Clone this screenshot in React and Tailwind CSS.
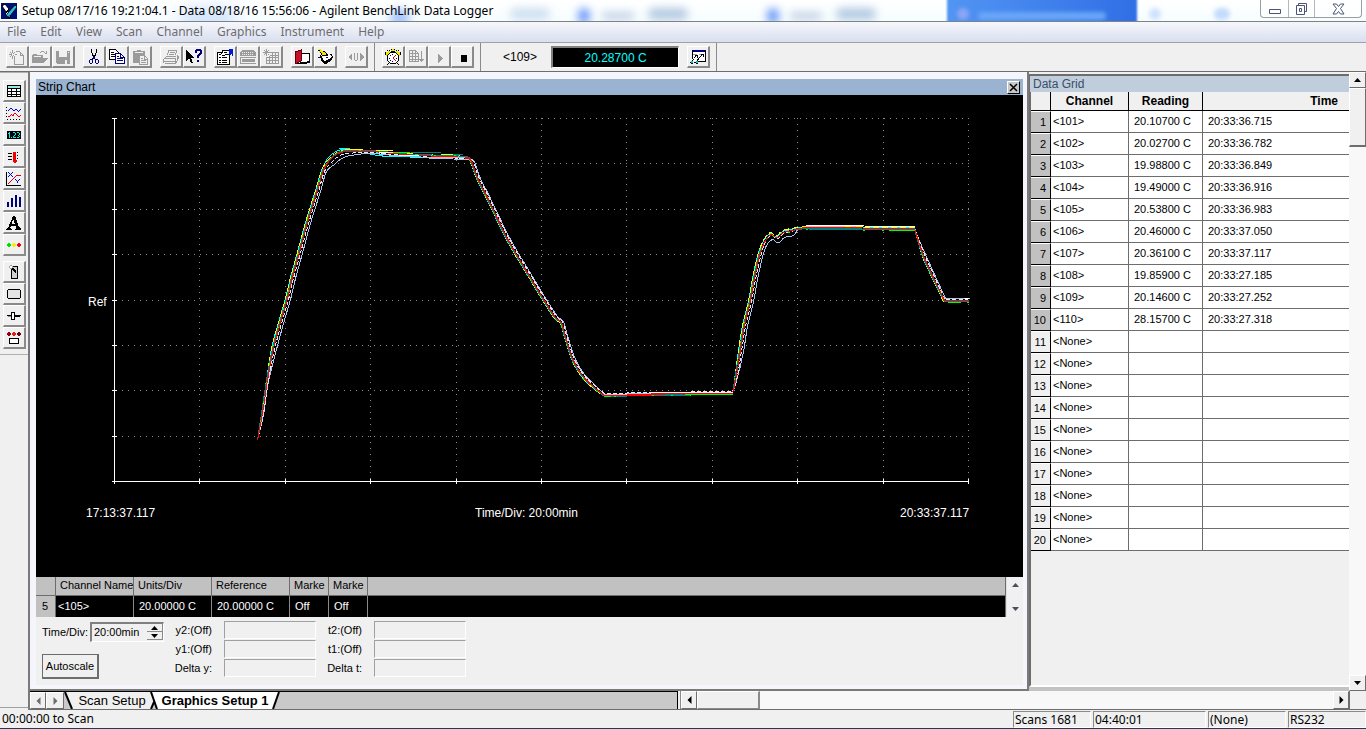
import { useState } from 'react';
import clsx from 'clsx';

const MENU = ['File', 'Edit', 'View', 'Scan', 'Channel', 'Graphics', 'Instrument', 'Help'];

const READINGS = [
  ['<101>', '20.10700 C', '20:33:36.715'],
  ['<102>', '20.02700 C', '20:33:36.782'],
  ['<103>', '19.98800 C', '20:33:36.849'],
  ['<104>', '19.49000 C', '20:33:36.916'],
  ['<105>', '20.53800 C', '20:33:36.983'],
  ['<106>', '20.46000 C', '20:33:37.050'],
  ['<107>', '20.36100 C', '20:33:37.117'],
  ['<108>', '19.85900 C', '20:33:27.185'],
  ['<109>', '20.14600 C', '20:33:27.252'],
  ['<110>', '28.15700 C', '20:33:27.318'],
  ...Array.from({ length: 10 }, () => ['<None>', '', '']),
];

// [phase, x, y] - one temperature profile, each channel is a small shift of it
const PROFILE = [
  ['start', 257, 440], ['first', 262, 413], ['first', 267, 380], ['up', 273, 348], ['up', 280, 322],
  ['up', 287, 298], ['up', 292, 277], ['up', 300, 248], ['up', 307, 222], ['up', 317, 190],
  ['up', 323, 170], ['knee', 329, 160], ['knee', 336, 154], ['knee', 345, 151], ['top', 370, 151],
  ['top', 393, 153], ['top', 417, 155], ['top', 464, 157], ['down', 471, 161], ['down', 477, 177],
  ['down', 487, 197], ['down', 508, 240], ['down', 530, 277], ['down', 542, 297], ['down', 555, 317],
  ['down', 561, 322], ['down', 565, 336], ['down', 573, 360], ['down', 582, 375], ['down', 594, 387],
  ['low', 604, 395], ['low', 650, 394], ['low', 732, 393], ['first', 735, 380], ['up', 740, 350],
  ['up', 744, 325], ['up', 750, 300], ['up', 755, 273], ['up', 760, 252], ['bump', 765, 240],
  ['bump', 771, 234], ['bump', 775, 237], ['bump', 778, 237], ['bump', 783, 232], ['bump', 792, 230],
  ['mid', 797, 228], ['mid', 807, 227], ['mid', 914, 228], ['down', 923, 255], ['down', 932, 275],
  ['end', 944, 300], ['end', 968, 300],
];

const SHARP = ['start', 'low', 'mid', 'end'];

const TRACES = [
  { color: '#aac4ec', first: [1, 1], up: [3, 1], knee: [5, 4], top: [0, 2], down: [2, -1], low: [0, -1], bump: [1, 5], mid: [0, 1], end: [1, -2] },
  { color: '#e6ecf8', dash: '4 2', first: [1, 0], up: [1, 1], knee: [2, 2], top: [0, 1], down: [1, -1], low: [0, -2], bump: [0, 1], mid: [0, -1], end: [0, -1] },
  { color: '#00ffff', first: [-1, 0], up: [-2, 0], knee: [-2, -2], top: [0, 0], down: [-1, 1], low: [0, 1], bump: [-1, -1], mid: [0, -1], end: [-1, 1] },
  { color: '#ffff00', dash: '6 3', first: [-1, 0], up: [-2, 0], knee: [-1, -1], top: [0, -1], down: [-1, 1], low: [0, 1], bump: [-1, -2], mid: [0, -1], end: [-1, 1] },
  { color: '#008080', first: [-1, 0], up: [-1, 0], knee: [0, -1], top: [0, -1], down: [-1, 0], low: [0, 1], bump: [0, 0], mid: [0, 1], end: [0, 1] },
  { color: '#00ff00', dash: '2 17', first: [-1, 0], up: [-1, 0], knee: [-1, 0], top: [0, -1], down: [-1, 1], low: [0, 1], bump: [0, 1], mid: [0, 2], end: [0, 2] },
  { color: '#ff0000', first: [0, 0], up: [0, 0], knee: [0, 0], top: [0, 0], down: [0, 0], low: [0, 0], bump: [0, 0], mid: [0, 0], end: [0, 0] },
];

// stretches where another channel is drawn over the flat parts
const OVERLAYS = [
  ['#00ffff', 'M338 148H349M370 154L386 156H420'],
  ['#ffff00', 'M344 149H362M375 150H392M406 153H412M440 154H452'],
  ['#00ff00', 'M392 152H409M603 396H610M684 394H732M830 229H834M888 230H914M948 302H960'],
  ['#008080', 'M362 150H374M410 152H440M452 154H462M664 394H682M808 229H914'],
  ['#ffffff', 'M378 152H392M398 155H418M650 392H732M805 225H863M864 226H914M963 298H968'],
  ['#c0c0c0', 'M424 157H464M805 226H862'],
  ['#ffff00', 'M844 226H850M855 226H862'],
  ['#ff0000', 'M464 158H470M620 395H650M650 393H732M868 228H914M945 300H968'],
];

// Catmull-Rom through the shifted points; plateau ends stay sharp
function tracePath(trace) {
  const pts = PROFILE.map(([phase, x, y]) => {
    const [dx, dy] = trace[phase] || [0, 0];
    return [x + dx, y + dy];
  });
  const slope = (i) => {
    if (SHARP.includes(PROFILE[i][0]) || !pts[i + 1]) return [0, 0];
    return [(pts[i + 1][0] - pts[i - 1][0]) / 6, (pts[i + 1][1] - pts[i - 1][1]) / 6];
  };
  return pts.slice(1).reduce((d, [x, y], i) => {
    const [ax, ay] = slope(i);
    const [bx, by] = slope(i + 1);
    return `${d}C${pts[i][0] + ax} ${pts[i][1] + ay} ${x - bx} ${y - by} ${x} ${y}`;
  }, `M${pts[0][0]} ${pts[0][1]}`);
}

function StripChart() {
  const xs = Array.from({ length: 11 }, (_, i) => Math.round(114 + i * 85.4) + 0.5);
  const ys = Array.from({ length: 9 }, (_, i) => Math.round(118 + i * 45.4) + 0.5);
  return (
    <svg viewBox="36 95 987 482" className="block h-full w-full font-['Liberation_Sans',Arial,sans-serif] text-xs" fill="none" shapeRendering="crispEdges">
      <g stroke="#8c8c8c" strokeDasharray="1 5">
        {xs.slice(1).map((x) => <path key={x} d={`M${x} 118V481`} />)}
        {ys.slice(0, 8).map((y) => <path key={y} d={`M116 ${y}H969`} />)}
      </g>
      <g stroke="#ffffff">
        <path d="M114.5 118V482M112 481.5H969" />
        {xs.map((x) => <path key={x} d={`M${x} 479V484`} />)}
        {ys.map((y) => <path key={y} d={`M112 ${y}H117`} />)}
      </g>
      <g transform="translate(0.5 0.5)">
        {TRACES.map((t) => (
          <path key={t.color} d={tracePath(t)} stroke={t.color} strokeDasharray={t.dash} />
        ))}
        {OVERLAYS.map(([color, d]) => <path key={d} d={d} stroke={color} />)}
      </g>
      <g fill="#ffffff">
        <text x="88" y="306">Ref</text>
        <text x="86" y="517">17:13:37.117</text>
        <text x="475" y="517">Time/Div: 20:00min</text>
        <text x="900" y="517">20:33:37.117</text>
      </g>
    </svg>
  );
}

function Ico({ children, w = 16 }) {
  return (
    <svg width={w} height="16" viewBox={`0 0 ${w} 16`} fill="none" shapeRendering="crispEdges" className="block shrink-0" aria-hidden="true">
      {children}
    </svg>
  );
}

function Lamp({ x, y, color }) {
  return <path d={`M${x + 1} ${y}h2v1h1v2h-1v1h-2v-1h-1v-2h1z`} fill={color} />;
}

const G = '#9b9b9b';

const icons = {
  new: (
    <Ico>
      <path d="M7 2.5h4M11.5 3v3h3M12.5 4v1M13.5 5v1M14.5 6v9M5.5 8v7M5 15.5h10" stroke={G} />
      <path d="M0 5.5h3M6 5.5h2M3.5 1v3M3.5 7v3M1.5 3v1M2.5 4v1M5.5 3v1M4.5 4v1M2.5 6v1M1.5 7v1M4.5 6v1M5.5 7v1" stroke={G} />
    </Ico>
  ),
  open: (
    <Ico>
      <path d="M0 6h1V5h4v1h6v3H5v1H4v1H3v2H1v1H0z" fill={G} />
      <path d="M5 9h11l-4 5H1z" fill={G} />
      <path d="M8 3.5h1M9 2.5h3M12 3.5h1M13 4.5h2M14.5 2v3M1 7h3M2 9h2" stroke={G} />
      <path d="M2 7.5h7" stroke="#f0f0f0" />
    </Ico>
  ),
  save: (
    <Ico>
      <path d="M1 2h14v13H2l-1-1z" fill={G} />
      <path d="M4 2h8v6H4zM10 11h2v4h-2z" fill="#f0f0f0" />
      <path d="M13 3.5h1" stroke="#f0f0f0" />
    </Ico>
  ),
  cut: (
    <Ico>
      <path d="M5.5 0v4M10.5 0v4M6.5 4v3M9.5 4v3M7.5 6v3M8.5 6v3" stroke="#000" />
      <path d="M7.5 8v2M8.5 8v2M6 9.5h1M9 10.5h2M4 10.5h2M3.5 11v3M6.5 10v4M4 14.5h2M9.5 11v3M12.5 11v3M10 14.5h2M10 10.5h2" stroke="#00007b" />
    </Ico>
  ),
  copy: (
    <Ico>
      <path d="M.5.5h6l3 3v7h-9z" fill="#fff" stroke="#000" />
      <path d="M2 3.5h3M2 5.5h4M2 7.5h4" stroke="#000" />
      <path d="M6.5 4.5h5l4 4v6h-9z" fill="#fff" stroke="#00007b" />
      <path d="M11.5 5v3h3M8 7.5h2M8 9.5h6M8 11.5h6" stroke="#00007b" />
    </Ico>
  ),
  paste: (
    <Ico>
      <path d="M1 2h4V1h4v1h4v4H7v8H1z" fill={G} />
      <path d="M3 3.5h8" stroke="#f0f0f0" />
      <path d="M7.5 6.5h5l3 3v6h-8z" fill="#f0f0f0" stroke={G} />
      <path d="M12.5 7v3h3M9 9.5h2M9 11.5h5M9 13.5h5" stroke={G} />
    </Ico>
  ),
  print: (
    <Ico>
      <path d="M5 1.5h9M5.5 2v2M4.5 4v2M13.5 2v2M12.5 4v2M7 3.5h5M6 5.5h5M3 7.5h10M2.5 8v1M1 9.5h11M.5 10v4M1 12.5h11M2 14.5h11M12.5 9v5M14.5 6v6M13.5 12v2M15.5 7v3" stroke={G} />
    </Ico>
  ),
  help: (
    <Ico>
      <path d="M0 1v11l3-3 2 5h2l-2-5h4z" fill="#000" />
      <path d="M9 3V1h1V0h5v1h1v4h-1v1h-1v1h-1v2h-2V6h1V5h1V4h1V2h-3v2H9zM11 11h2v2h-2z" fill="#00007b" />
    </Ico>
  ),
  props: (
    <Ico>
      <path d="M.5 3.5h12v12H.5z" fill="#fff" stroke="#000" />
      <path d="M2 8.5h2M5 8.5h5M2 11.5h2M5 11.5h5M2 13.5h2M5 13.5h5" stroke="#000" />
      <path d="M3 5l2-2V1h7v4H9l-2 2z" fill="#fff" />
      <path d="M2 5.5h2M4 4.5h1M5.500 1v3M5 1.500h7M8 5.500h4M5 6.500h3M7 3.500h3" stroke="#000" />
      <path d="M12 0h4v7h-1V5h-1v1h-2z" fill="#0018d8" />
    </Ico>
  ),
  instr: (
    <Ico>
      <path d="M2 1h12v1h1v1h1v4H0V3h1V2h1z" fill={G} />
      <path d="M0 8h16v7H0z" fill={G} />
      <path d="M2 3.500h12M2 5.500h12" stroke="#f0f0f0" strokeDasharray="1 1" />
      <path d="M1 9.500h14v4H1z" stroke="#f0f0f0" />
    </Ico>
  ),
  scanGrid: (
    <Ico>
      <path d="M3.5 0v7M0 3.5h7M1.5 1v1M5.5 1v1M1.5 5v1M5.5 5v1M2.5 2v1M4.5 2v1M2.5 4v1" stroke={G} />
      <path d="M7 3.5h9M3 8.5h13M3 11.5h13M3 14.5h13M3.5 8v7M6.5 7v8M9.5 4v11M12.5 4v11M15.5 4v11M7 6h9" stroke={G} />
    </Ico>
  ),
  redBook: (
    <Ico>
      <path d="M6 4h9v9H6z" fill="#fff" stroke="#000" />
      <path d="M1 3l6-2v11l-6 3z" fill="#c8102a" stroke="#5c0010" />
      <path d="M3 14.5h10M13 12.5h3" stroke="#000" />
    </Ico>
  ),
  note: (
    <Ico>
      <path d="M5 9l3 5h2l5-5-1-3-4-1z" fill="#fff" />
      <path d="M3 6v3h1v3h1v1h1v1h1v1h3v-1h1v-1h2v-1h1v-1h1V9h1V7h-1V5h-2v1h1v1h1v1h-1v1h-1v1h-2v1H9v1H7v-1H6V9H5V7z" fill="#000" />
      <path d="M2 0h2v1h1v1h2v1h1v1h2v3H6V6H5V5H4V3H2z" fill="#f4e400" />
      <path d="M1 1.500h2M3 3.500h1M4.500 4v2M5 6.500h6M8.500 3v1M9.500 4v2M10.500 5v2M6 2.500h2" stroke="#000" />
      <path d="M1 8.500h2M9 8.500h2M11 11.500h1" stroke="#00007b" />
    </Ico>
  ),
  arrows: (
    <Ico>
      <path d="M4 4v8L0 8zM12 4v8l4-4z" fill={G} />
      <path d="M6.5 4v7M9.5 4v7M7 11.500h2" stroke={G} />
    </Ico>
  ),
  clock: (
    <Ico>
      <path d="M1 3h2V2h2v2L2 7H1zM15 3h-2V2h-2v2l3 3h1zM6 0h4v2H6z" fill="#e8e800" />
      <path d="M6 .5h1M9 .5h1M4 1.500h1M11 1.500h1M.5 3v3M15.500 3v3M2.500 1v1M13.500 1v1M6 2.500h4" stroke="#000" />
      <path d="M5 4h6v1h1v1h1v6h-1v1h-1v1H5v-1H4v-1H3V6h1V5h1z" fill="#fff" />
      <path d="M5 3.500h6M4.500 4v1M11.500 4v1M3.500 5v1M12.500 5v1M2.500 6v6M13.500 6v6M3.500 12v1M12.500 12v1M4.500 13v1M11.500 13v1M5 14.500h6M3 14.500h1M12 14.500h1M2 15.500h1M13 15.500h1" stroke="#000" />
      <path d="M10.500 6v1M9.500 7v1M8.500 8v2M9.500 10v1M10.500 11v1" stroke="#e00000" />
      <path d="M7.500 5v1M4.500 9v1M7.500 12v1M11.500 9v1M5.500 6v1M5.500 11v1" stroke="#00007b" />
    </Ico>
  ),
  gridDown: (
    <Ico>
      <path d="M1.500 1v12M4.500 1v12M7.500 1v12M10.500 4v9M1 1.500h7M1 4.500h10M1 7.500h10M1 10.500h10M1 12.500h10M8.500 2v1M9.500 3v1" stroke={G} />
      <path d="M13.500 2v11M11.500 10v1M12.500 10v2M14.500 10v2M15.500 10v1" stroke={G} />
    </Ico>
  ),
  play: <Ico><path d="M7 5v9l5-4.500z" fill={G} /></Ico>,
  stop: <Ico><path d="M7 6h6v7H7z" fill="#000" /></Ico>,
  graph: (
    <Ico>
      <path d="M2.500 2.500h13v9h-13z" fill="#fff" />
      <path d="M2 1h14v2H2z" fill="#00007b" />
      <path d="M2.500 2v8M15.500 2v10M8 12.500h8" stroke="#000" />
      <path d="M3 5.500h4M9 5.500h3" stroke="#9b9b9b" />
      <path d="M4.500 8v1M5.500 7v1M6.500 6v1M5 6.500h3M7.500 6v3M9.500 8v1M10.500 7v1M11.500 6v1M12.500 5v1M11 5.500h3M13.500 5v3" stroke="#000" />
      <path d="M3 10.500h1M2.500 11v1M1.500 12v1M4 13.500h2M7.500 10v2M6 12.500h2M8.500 9v2M9.500 12v1M1 14.500h2M6 14.500h2M.5 13v1" stroke="#000" />
      <path d="M1 12h2v2H1zM6 12h2v2H6z" fill="#00c8d0" />
    </Ico>
  ),
  table: (
    <Ico>
      <path d="M1 2h14v12H1z" fill="#fff" />
      <path d="M2 3h12v2H2z" fill="#9fe8e8" />
      <path d="M1.500 2v12M14.500 2v12M5.500 5v9M10.500 5v9M1 2.500h14M1 5.500h14M1 8.500h14M1 11.500h14M1 13.500h14" stroke="#000" />
    </Ico>
  ),
  wave: (
    <Ico>
      <path d="M.5 2v12" stroke="#000" strokeDasharray="1 2" />
      <path d="M1 14.500h15" stroke="#000" strokeDasharray="1 2" />
      <path d="M2 5.500h1M3 4.500h1M4 3.500h2M6 4.500h1M7 5.500h2M9 4.500h2M11 5.500h1M12 6.500h1M13 5.500h1M14 4.500h1" stroke="#0000e0" />
      <path d="M2 11.500h2M4 10.500h1M5 9.500h1M6 10.500h2M8 8.500h2M10 9.500h1M11 10.500h1M12 11.500h2M14 10.500h1M7.500 9v1" stroke="#f00000" />
    </Ico>
  ),
  digital: (
    <Ico>
      <path d="M1 4h14v8H1z" fill="#000" />
      <path d="M3.500 5v6M2 6.500h1M5 10.500h1M7 5.500h2M9.500 6v2M8 8.500h1M7.500 9v2M7 10.500h3M11 5.500h2M13.500 6v2M12 8.500h1M13.500 9v1M11 10.500h2" stroke="#00f0f0" />
    </Ico>
  ),
  thermo: (
    <Ico>
      <path d="M2 4.500h4M2 7.500h4M2 10.500h4" stroke="#000" />
      <path d="M7 3h3v8h1v2h-1v1H8v-1H7z" fill="#f00000" />
      <path d="M11.500 3v9" stroke="#000" strokeDasharray="1 2" />
    </Ico>
  ),
  xy: (
    <Ico>
      <path d="M.5 1v14M0 14.500h15" stroke="#000" />
      <path d="M2 12.500h1M3 11.500h1M4 10.500h1M5 9.500h1M6 8.500h1M7 7.500h1M8 6.500h1M9 5.500h1M10 4.500h5" stroke="#e00000" />
      <path d="M2 1.500h1M3 2.500h1M4 3.500h1M5 4.500h1M6 1.500h1M5 2.500h1M3 4.500h1M2 5.500h1M6 5.500h1M9 8.500h1M10 9.500h1M12 9.500h1M13 8.500h1M11.500 10v2" stroke="#0000e0" />
    </Ico>
  ),
  bars: <Ico><path d="M1 9h2v5H1zM5 5h2v9H5zM9 2h2v12H9zM13 4h2v10h-2z" fill="#00007b" /></Ico>,
  text: (
    <Ico>
      <path d="M7 1h2l4 11 2 1v2h-6v-1l1.500-1-1-2H5l-1 2 1.500 1v1H0v-1l2-1zM5.500 9h3.500L7.200 4.500z" fill="#000" fillRule="evenodd" />
    </Ico>
  ),
  lamps: (
    <Ico>
      <Lamp x={1} y={6} color="#00e000" />
      <Lamp x={6} y={6} color="#f0f000" />
      <Lamp x={11} y={6} color="#f00000" />
    </Ico>
  ),
  lever: (
    <Ico>
      <path d="M5.500 2.500h6v12h-6z" fill="#d0d0d0" stroke="#000" />
      <path d="M4 3l6 7V7L7 3z" fill="#000" />
      <Lamp x={3} y={1} color="#a0a0a0" />
      <path d="M4 2h2v2H4z" fill="#fff" />
    </Ico>
  ),
  button: <Ico><rect x="1.500" y="3.500" width="13" height="9" rx="2" fill="#e4e4e4" stroke="#000" /></Ico>,
  slider: (
    <Ico>
      <path d="M1 7.500h4M9 7.500h6M9 8.500h5" stroke="#000" />
      <path d="M5.500 4.500h3v7h-3z" fill="#fff" stroke="#000" />
      <path d="M2 8.500h3" stroke="#909090" />
    </Ico>
  ),
  panel: (
    <Ico>
      <Lamp x={1} y={2} color="#900018" />
      <Lamp x={6} y={2} color="#e02010" />
      <Lamp x={11} y={2} color="#700010" />
      <rect x="3.500" y="8.500" width="9" height="5" rx="1" fill="#fff" stroke="#000" />
    </Ico>
  ),
};

const TOOL_GROUPS = [
  ['new', 'open', 'save'],
  ['cut', 'copy', 'paste'],
  ['print', 'help'],
  ['props', 'instr', 'scanGrid'],
  ['redBook', 'note'],
  ['arrows'],
];
const SIDE_GROUPS = [
  ['table', 'wave', 'digital', 'thermo', 'xy', 'bars', 'text', 'lamps'],
  ['lever', 'button', 'slider', 'panel'],
];

function ToolButton({ name }) {
  return (
    <button
      type="button"
      aria-label={name}
      className="flex h-[22px] w-[23px] shrink-0 items-center justify-center border-t border-r-2 border-b-2 border-l border-t-white border-r-[#8a8a8a] border-b-[#8a8a8a] border-l-white bg-[#f0f0f0]"
    >
      {icons[name]}
    </button>
  );
}

const ARROWS = {
  up: 'M0 6h7L3.500 2z',
  down: 'M0 2h7L3.500 6z',
  left: 'M5.500 0v8L1.500 4z',
  right: 'M1.500 0v8l4-4z',
};

function Arrow({ dir, color = '#000' }) {
  return (
    <svg width="7" height="8" viewBox="0 0 7 8" className="block shrink-0" aria-hidden="true">
      <path d={ARROWS[dir]} fill={color} />
    </svg>
  );
}

function ScrollButton({ dir, className, color }) {
  return (
    <button
      type="button"
      aria-label={`Scroll ${dir}`}
      className={clsx('flex shrink-0 items-center justify-center border-t border-l border-r border-b border-t-white border-l-white border-r-[#6d6d6d] border-b-[#6d6d6d] bg-[#f0f0f0]', className)}
    >
      <Arrow dir={dir} color={color} />
    </button>
  );
}

function TitleBar() {
  return (
    <header className="relative flex h-[22px] shrink-0 items-center overflow-hidden border-b border-[#7e8285] bg-gradient-to-b from-white to-[#f6fdff]">
      <div className="absolute inset-0" aria-hidden="true">
        <div className="absolute top-2 left-[180px] h-5 w-14 rounded-full bg-[#cfe2fb] blur-sm" />
        <div className="absolute top-2 left-[390px] h-5 w-5 rounded-full bg-[#a9c6fb] blur-xs" />
        <div className="absolute top-2 left-[510px] h-3 w-10 rounded-full bg-[#cfe0f0] blur-xs" />
        <div className="absolute top-2 left-[578px] h-4 w-3 rounded-full bg-[#6f9cf6] blur-xs" />
        <div className="absolute top-3 left-[602px] h-2 w-8 rounded-full bg-[#c3d2e4] blur-xs" />
        <div className="absolute top-2 left-[648px] h-3 w-10 rounded-full bg-[#b4cae2] blur-xs" />
        <div className="absolute top-2 left-[767px] h-4 w-3 rounded-full bg-[#6f9cf6] blur-xs" />
        <div className="absolute top-3 left-[790px] h-2 w-8 rounded-full bg-[#c3d2e4] blur-xs" />
        <div className="absolute top-2 left-[836px] h-3 w-10 rounded-full bg-[#b4cae2] blur-xs" />
        <div className="absolute -top-1 left-[947px] h-7 w-[190px] bg-gradient-to-r from-[#5295f3] to-[#306ee6] blur-[1px]" />
        <div className="absolute top-2 left-[957px] h-3 w-3 rounded-full bg-[#8ba6f6] blur-[2px]" />
        <div className="absolute top-3 left-[978px] h-2 w-32 rounded-full bg-[#69a6f8] blur-[2px]" />
        <div className="absolute top-2 left-[1149px] h-3 w-3 rounded-full bg-[#cfe3fd] blur-[2px]" />
        <div className="absolute top-2 left-[1214px] h-3 w-4 rounded-full bg-[#c3dcfb] blur-[2px]" />
      </div>
      <svg width="16" height="16" viewBox="0 0 16 16" className="relative ml-px shrink-0" fill="none" aria-hidden="true">
        <path d="M0 0h16v16H0z" fill="#00107b" />
        <path d="M1 3l3-2 4 5-3 3zM4 11l3-3 3 5-2 2z" fill="#fff" stroke="#000" />
        <path d="M6 11l8-9 2 2-7 9-4 1z" fill="#30c0d8" stroke="#000" strokeWidth=".8" />
      </svg>
      <h1 className="relative ml-[5px] text-xs text-black">
        Setup 08/17/16 19:21:04.1 - Data 08/18/16 15:56:06 - Agilent BenchLink Data Logger
      </h1>
      <div className="relative mr-1 ml-auto flex h-[18px] self-start rounded-b border border-t-0 border-[#9a9ea2] bg-white/60">
        <button type="button" aria-label="Minimize" className="flex w-7 items-center justify-center border-r border-[#b4b8bc]">
          <svg width="12" height="16" viewBox="0 0 12 16" fill="#fff" stroke="#4a5378"><path d="M.5 8.500h11v4H.5z" /></svg>
        </button>
        <button type="button" aria-label="Restore" className="flex w-[26px] items-center justify-center border-r border-[#b4b8bc]">
          <svg width="13" height="14" viewBox="0 0 13 14" fill="#fff" stroke="#4a5378">
            <path d="M3.500 1.500h8v8h-8z" />
            <path d="M1.500 3.500h8v9h-8zM4.500 6.500h2v3h-2z" />
          </svg>
        </button>
        <button type="button" aria-label="Close" className="flex w-[46px] items-center justify-center">
          <svg width="13" height="12" viewBox="0 0 13 12" fill="#fff" stroke="#4a5378">
            <path d="M1 1h3.500l2 2.500 2-2.500H12L8.500 5.500 12 11H8.500l-2-2.500-2 2.500H1l3.500-5.500z" />
          </svg>
        </button>
      </div>
    </header>
  );
}

function Toolbar() {
  return (
    <div className="flex h-[29px] shrink-0 items-center border-b border-[#6d6d6d] bg-[#f0f0f0] pl-1.5">
      <div className="flex gap-2">
        {TOOL_GROUPS.map((group) => (
          <div key={group[0]} className="flex">
            {group.map((name) => <ToolButton key={name} name={name} />)}
          </div>
        ))}
      </div>
      <div className="mr-[7px] ml-1.5 h-full border-l border-[#8a8a8a]" />
      {['clock', 'gridDown', 'play', 'stop'].map((name) => <ToolButton key={name} name={name} />)}
      <div className="ml-1.5 h-full border-l border-[#8a8a8a]" />
      <label htmlFor="monitor" className="ml-[22px] font-['Liberation_Sans',Arial,sans-serif] text-xs">&lt;109&gt;</label>
      <input
        id="monitor"
        readOnly
        value="20.28700 C"
        className="ml-3.5 h-[22px] w-32 border border-t-2 border-l-2 border-t-[#808080] border-r-white border-b-white border-l-[#808080] bg-black text-center font-['Liberation_Sans',Arial,sans-serif] text-xs text-[#00ffff]"
      />
      <div className="ml-2 flex"><ToolButton name="graph" /></div>
      <div className="ml-1.5 h-full border-l border-[#8a8a8a]" />
    </div>
  );
}

function ChannelTable() {
  return (
    <div className="flex h-10 shrink-0 bg-[#f0f0f0]">
      <table className="w-full table-fixed border-separate border-spacing-0 text-[11px] leading-none">
        <colgroup>
          <col className="w-5" />
          <col className="w-[78px]" />
          <col className="w-[78px]" />
          <col className="w-[78px]" />
          <col className="w-[39px]" />
          <col className="w-[39px]" />
          <col />
        </colgroup>
        <thead>
          <tr className="h-[19px] bg-[#c1c1c1] text-left text-black">
            {['', 'Channel Name', 'Units/Div', 'Reference', 'Marke', 'Marke', ''].map((h, i) => (
              <th key={i} className="overflow-hidden border-r border-b border-[#6d6d6d] p-0 pb-0.5 pl-1 font-normal whitespace-nowrap">{h}</th>
            ))}
          </tr>
        </thead>
        <tbody>
          <tr className="h-[21px] bg-black text-white">
            <td className="border-r border-[#6d6d6d] bg-[#c1c1c1] p-0 pl-1.5 text-black">5</td>
            <td className="border-r border-[#8a8a8a] p-0 pl-0.5">&lt;105&gt;</td>
            <td className="border-r border-[#8a8a8a] p-0 pl-[5px]">20.00000 C</td>
            <td className="border-r border-[#8a8a8a] p-0 pl-[5px]">20.00000 C</td>
            <td className="border-r border-[#8a8a8a] p-0 pl-[5px]">Off</td>
            <td className="border-r border-[#8a8a8a] p-0 pl-[5px]">Off</td>
            <td className="border-r border-[#6d6d6d] p-0" />
          </tr>
        </tbody>
      </table>
      <div className="flex w-[17px] shrink-0 flex-col justify-between border-l border-[#e0e0e0] py-1">
        <button type="button" aria-label="Previous channel" className="flex justify-center"><Arrow dir="up" color="#4a5060" /></button>
        <button type="button" aria-label="Next channel" className="flex justify-center"><Arrow dir="down" color="#4a5060" /></button>
      </div>
    </div>
  );
}

function MarkerField({ id, label }) {
  return (
    <>
      <label htmlFor={id} className="pr-3 text-right leading-[18px] whitespace-nowrap">{label}</label>
      <input
        id={id}
        readOnly
        className="h-[18px] w-[92px] border border-t-[#a0a0a0] border-r-white border-b-white border-l-[#a0a0a0] bg-[#f0f0f0]"
      />
    </>
  );
}

function ChartControls() {
  const [timeDiv, setTimeDiv] = useState('20:00min');
  return (
    <div className="flex h-[68px] shrink-0 bg-[#f0f0f0] pt-1 pl-1.5 text-[11px] text-black">
      <div className="flex w-[122px] flex-col items-start">
        <div className="flex h-[22px] items-center">
          <label htmlFor="time-div" className="w-12 whitespace-nowrap">Time/Div:</label>
          <div className="flex h-5 w-[74px] border border-t-2 border-l-2 border-t-[#808080] border-r-white border-b-white border-l-[#808080]">
            <input
              id="time-div"
              value={timeDiv}
              onChange={(e) => setTimeDiv(e.target.value)}
              className="w-[55px] bg-[#f0f0f0] pl-0.5"
            />
            <div className="flex w-4 flex-col">
              <button type="button" aria-label="Increase" className="flex h-2 items-center justify-center overflow-hidden border-r border-b border-[#8a8a8a]"><Arrow dir="up" /></button>
              <button type="button" aria-label="Decrease" className="flex h-2 items-center justify-center overflow-hidden border-r border-b border-[#8a8a8a]"><Arrow dir="down" /></button>
            </div>
          </div>
        </div>
        <button type="button" className="mt-[11px] h-[25px] w-[57px] border border-r-2 border-b-2 border-[#6d6d6d] bg-[#f0f0f0] text-center">
          Autoscale
        </button>
      </div>
      <div className="grid h-fit grid-cols-[60px_92px_58px_92px] gap-y-px">
        <MarkerField id="y2" label="y2:(Off)" />
        <MarkerField id="t2" label="t2:(Off)" />
        <MarkerField id="y1" label="y1:(Off)" />
        <MarkerField id="t1" label="t1:(Off)" />
        <MarkerField id="dy" label="Delta y:" />
        <MarkerField id="dt" label="Delta t:" />
      </div>
    </div>
  );
}

function ChartWindow() {
  return (
    <section className="flex min-w-0 flex-1 flex-col border-r-2 border-b-2 border-[#7a7a7a] bg-[#f5f6fc] pt-[7px] pr-1 pb-1 pl-1.5 font-['Liberation_Sans',Arial,sans-serif]">
      <div className="flex h-4 shrink-0 items-center justify-between bg-[#9ab3d1] pr-[3px] pl-0.5">
        <h2 className="text-xs text-black">Strip Chart</h2>
        <button type="button" aria-label="Close chart" className="flex h-[13px] w-[13px] items-center justify-center border border-t-white border-r-black border-b-black border-l-white bg-[#c8c8c8]">
          <svg width="9" height="9" viewBox="0 0 9 9" stroke="#000" strokeWidth="1.500"><path d="M1 1l7 7M8 1L1 8" /></svg>
        </button>
      </div>
      <div className="min-h-0 flex-1 bg-black"><StripChart /></div>
      <ChannelTable />
      <ChartControls />
    </section>
  );
}

function DataGrid() {
  return (
    <section className="flex w-[320px] shrink-0 flex-col border-b-4 border-[#c3c3c3] pt-0.5 font-['Liberation_Sans',Arial,sans-serif]">
      <h2 className="h-[18px] shrink-0 border-t-2 border-l border-[#6d6d6d] bg-[#bfcddc] pl-[3px] text-xs leading-4 text-[#3c4e66]">Data Grid</h2>
      <div className="flex-1 border-b-2 border-l-2 border-b-white border-l-[#6d6d6d] bg-[#f0f0f0]">
        <table className="w-full table-fixed border-separate border-spacing-0 text-[11px] leading-none text-black">
          <colgroup>
            <col className="w-5" />
            <col className="w-[78px]" />
            <col className="w-[74px]" />
            <col />
          </colgroup>
          <thead>
            <tr className="h-[19px] bg-[#f0f0f0] text-xs leading-none">
              <th className="border-r border-b border-black p-0" />
              <th className="border-r border-b border-black p-0">Channel</th>
              <th className="border-r border-b border-black p-0">Reading</th>
              <th className="border-b border-black p-0 pr-[11px] text-right">Time</th>
            </tr>
          </thead>
          <tbody>
            {READINGS.map(([channel, reading, time], i) => (
              <tr key={i} className="h-[22px] bg-white">
                <td
                  className={clsx(
                    'border-t border-r border-b border-t-white border-r-black border-b-black p-0 pr-1 text-right leading-none',
                    i < 10 ? 'bg-[#c1c1c1]' : 'bg-[#f0f0f0]'
                  )}
                >
                  {i + 1}
                </td>
                <td className="border-r border-b border-[#6d6d6d] p-0 pl-0.5">{channel}</td>
                <td className="border-r border-b border-[#6d6d6d] p-0 pl-[5px]">{reading}</td>
                <td className="border-b border-[#6d6d6d] p-0 pl-[5px]">{time}</td>
              </tr>
            ))}
          </tbody>
        </table>
      </div>
    </section>
  );
}

function SheetTabs() {
  return (
    <div className="flex h-[19px] shrink-0 border-b border-[#6d6d6d] bg-[#f0f0f0] font-['Liberation_Sans',Arial,sans-serif] text-[13px] leading-[17px] text-black">
      <div className="flex w-[648px] shrink-0 border-t border-r border-black bg-[#c9c9c9]">
        <ScrollButton dir="left" color="#6d6d6d" className="w-4" />
        <ScrollButton dir="right" color="#6d6d6d" className="w-[18px]" />
        <svg width="10" height="17" viewBox="0 0 10 17" className="shrink-0"><path d="M1 0h9v17H9z" fill="#f0f0f0" /><path d="M1 0l7 17" stroke="#000" strokeWidth="2" /></svg>
        <button type="button" className="w-[76px] shrink-0 bg-[#f0f0f0] text-center whitespace-nowrap">Scan Setup</button>
        <svg width="8" height="17" viewBox="0 0 8 17" className="shrink-0"><path d="M0 0h2l2 8-3 9H0z" fill="#f0f0f0" /><path d="M1 0h7v17H7z" fill="#fff" /><path d="M1 0l6 17M4 10l-3 7" stroke="#000" strokeWidth="2" /></svg>
        <button type="button" className="w-[114px] shrink-0 bg-white text-center font-bold whitespace-nowrap">Graphics Setup 1</button>
        <svg width="9" height="17" viewBox="0 0 9 17" className="shrink-0"><path d="M0 0h7L1 17H0z" fill="#fff" /><path d="M7 0L1 17" stroke="#000" strokeWidth="2" /></svg>
      </div>
      <div className="ml-0.5 flex min-w-0 flex-1 border-l border-[#8a8a8a] bg-[#f8f8f8]">
        <ScrollButton dir="left" className="w-4" />
        <div className="w-[63px] shrink-0 border-t border-r-2 border-b border-l border-t-white border-r-[#8a8a8a] border-b-[#8a8a8a] border-l-white bg-[#f0f0f0]" />
        <ScrollButton dir="right" className="ml-auto w-4" />
        <div className="w-[17px] shrink-0 border-l border-[#6d6d6d] bg-[#f0f0f0]" />
      </div>
    </div>
  );
}

function StatusBar() {
  const cell = 'border-t border-l border-r border-b border-t-[#8a8a8a] border-l-[#8a8a8a] border-r-white border-b-white pl-px';
  return (
    <footer className="flex h-[19px] shrink-0 items-stretch gap-0.5 border-b border-[#1d3c5c] bg-[#f0f0f0] pt-px text-xs leading-4 text-black">
      <span className="flex-1 pl-0.5">00:00:00 to Scan</span>
      <span className={clsx(cell, 'w-[78px]')}>Scans 1681</span>
      <span className={clsx(cell, 'w-[113px]')}>04:40:01</span>
      <span className={clsx(cell, 'w-[78px]')}>(None)</span>
      <span className={clsx(cell, 'w-[78px]')}>RS232</span>
    </footer>
  );
}

export default function App() {
  return (
    <div className="flex h-screen flex-col overflow-hidden bg-[#f0f0f0] font-['Noto_Sans',sans-serif]">
      <TitleBar />
      <nav className="flex h-[21px] shrink-0 items-center border-b border-[#a0a0a0] bg-gradient-to-b from-[#f6f7fb] to-[#d9dff0] pl-[7px] text-xs text-[#6d6d6d]">
        {MENU.map((item) => <a key={item} href="#" className="mr-[14px]">{item}</a>)}
      </nav>
      <Toolbar />
      <div className="flex min-h-0 flex-1">
        <aside className="mb-0.5 flex w-7 shrink-0 flex-col border-b border-[#a0a0a0]">
          <div className="flex flex-col gap-[5px] border-t border-b border-[#b0b0b0] pt-[7px] pb-[5px] pl-[3px]">
            {SIDE_GROUPS.map((group) => (
              <div key={group[0]}>
                {group.map((name) => <ToolButton key={name} name={name} />)}
              </div>
            ))}
          </div>
        </aside>
        <div className="flex min-w-0 flex-1 flex-col border-l-2 border-[#7a7a7a]">
          <div className="flex min-h-0 flex-1">
            <ChartWindow />
            <DataGrid />
            <div className="flex w-[17px] shrink-0 flex-col bg-[#f8f8f8]">
              <ScrollButton dir="up" className="h-4" />
              <div className="h-[59px] shrink-0 border-t border-r border-b-2 border-l border-t-white border-r-[#6d6d6d] border-b-[#6d6d6d] border-l-white bg-[#f0f0f0]" />
              <ScrollButton dir="down" className="mt-auto h-4" />
            </div>
          </div>
          <SheetTabs />
        </div>
      </div>
      <StatusBar />
    </div>
  );
}
